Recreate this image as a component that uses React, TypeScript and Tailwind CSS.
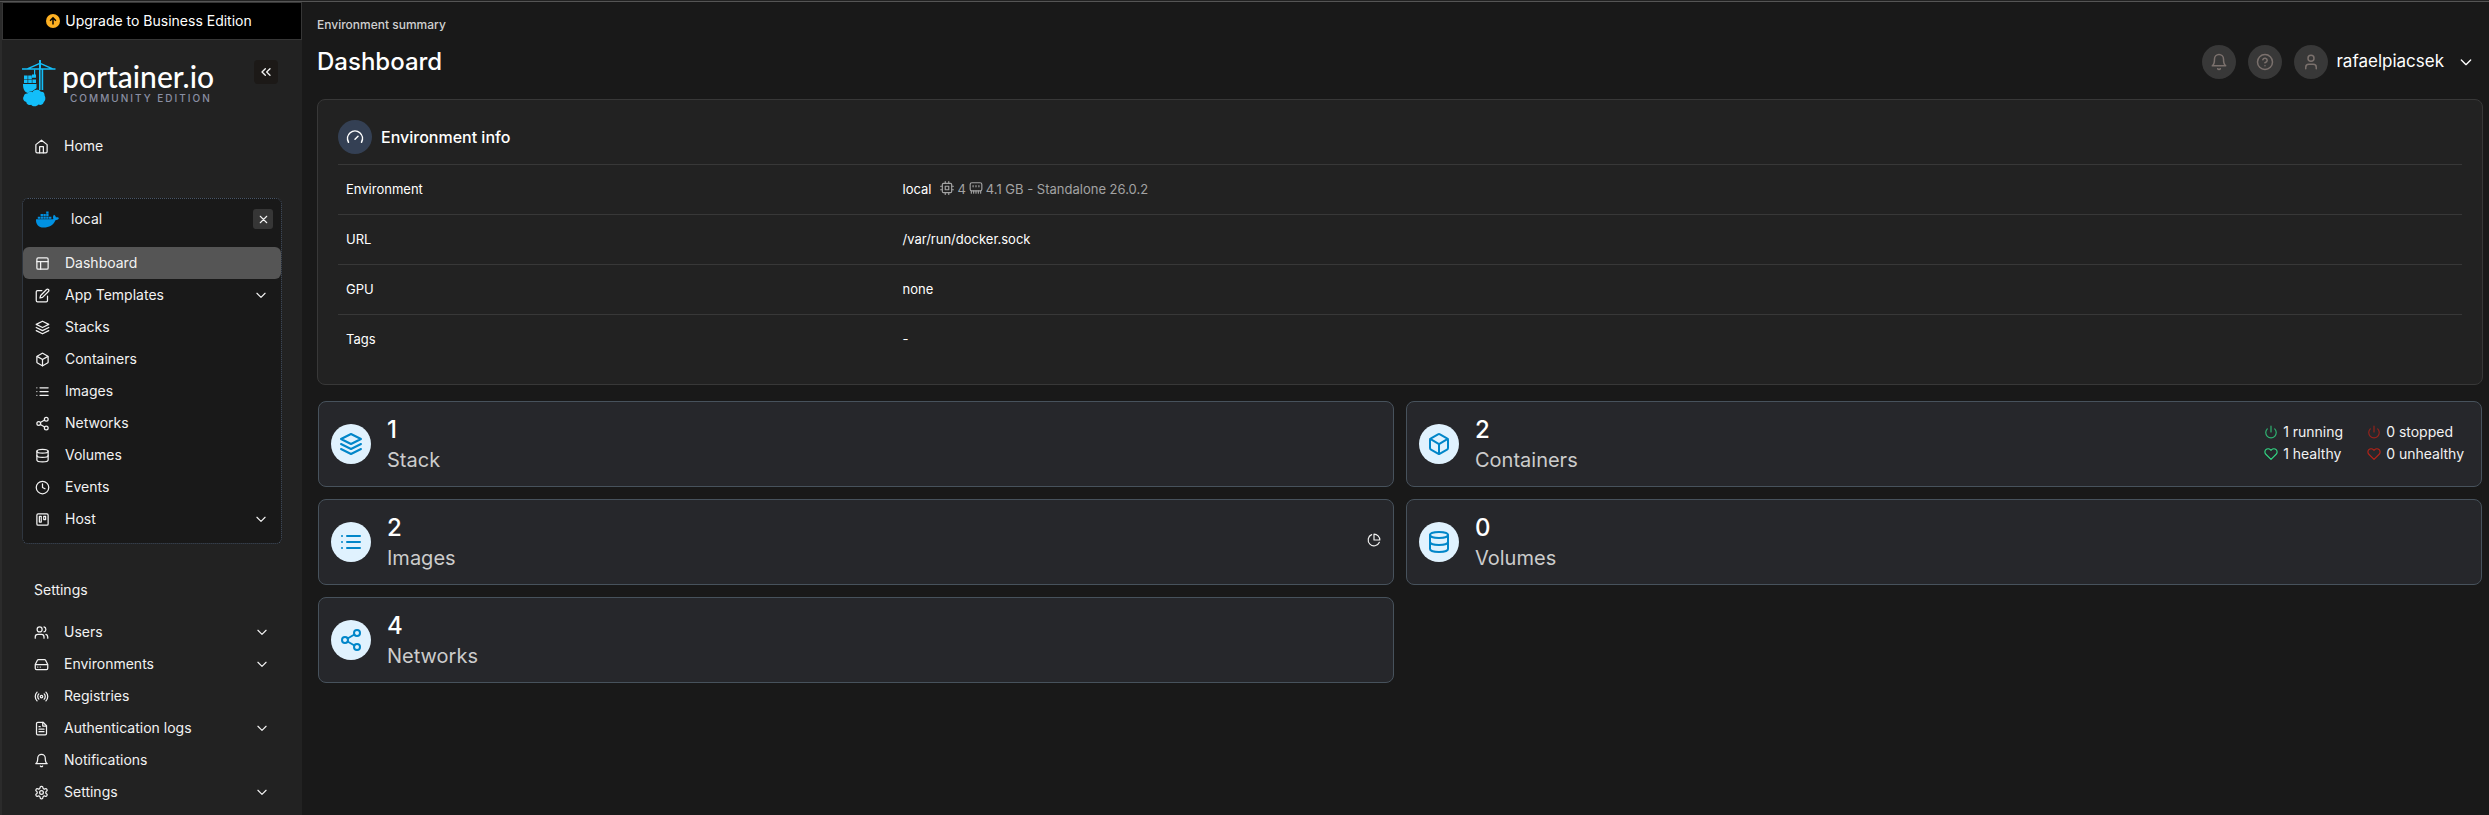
import React from "react";
import { FaDocker } from "react-icons/fa";

type IconName =
  | "home" | "layout" | "edit" | "layers" | "box" | "list" | "share" | "database" | "clock" | "trello"
  | "users" | "drive" | "radio" | "file" | "bell" | "settings" | "chevron" | "chevronsLeft" | "x"
  | "help" | "user" | "gauge" | "power" | "heart" | "pie" | "cpu" | "memory";

const shapes: Record<IconName, React.ReactNode> = {
  home: (<><path d="m3 9 9-7 9 7v11a2 2 0 0 1-2 2H5a2 2 0 0 1-2-2z" /><path d="M9 22V12h6v10" /></>),
  layout: (<><rect x="3" y="3" width="18" height="18" rx="2" /><path d="M3 9h18M9 21V9" /></>),
  edit: (<><path d="M11 4H4a2 2 0 0 0-2 2v14a2 2 0 0 0 2 2h14a2 2 0 0 0 2-2v-7" /><path d="M18.5 2.5a2.12 2.12 0 0 1 3 3L12 15l-4 1 1-4Z" /></>),
  layers: (<><path d="M12 2 2 7l10 5 10-5Z" /><path d="m2 17 10 5 10-5" /><path d="m2 12 10 5 10-5" /></>),
  box: (<><path d="M21 16V8a2 2 0 0 0-1-1.73l-7-4a2 2 0 0 0-2 0l-7 4A2 2 0 0 0 3 8v8a2 2 0 0 0 1 1.73l7 4a2 2 0 0 0 2 0l7-4A2 2 0 0 0 21 16z" /><path d="m3.27 6.96 8.73 5.05 8.73-5.05M12 22.08V12" /></>),
  list: <path d="M8 6h13M8 12h13M8 18h13M3 6h.01M3 12h.01M3 18h.01" />,
  share: (<><circle cx="18" cy="5" r="3" /><circle cx="6" cy="12" r="3" /><circle cx="18" cy="19" r="3" /><path d="m8.59 13.51 6.83 3.98M15.41 6.51l-6.82 3.98" /></>),
  database: (<><ellipse cx="12" cy="5" rx="9" ry="3" /><path d="M21 12c0 1.66-4 3-9 3s-9-1.34-9-3" /><path d="M3 5v14c0 1.66 4 3 9 3s9-1.34 9-3V5" /></>),
  clock: (<><circle cx="12" cy="12" r="10" /><path d="M12 6v6l4 2" /></>),
  trello: (<><rect x="3" y="3" width="18" height="18" rx="2" /><path d="M7 7h3v9H7zM14 7h3v5h-3z" /></>),
  users: (<><path d="M16 21v-2a4 4 0 0 0-4-4H6a4 4 0 0 0-4 4v2" /><circle cx="9" cy="7" r="4" /><path d="M22 21v-2a4 4 0 0 0-3-3.87M16 3.13a4 4 0 0 1 0 7.75" /></>),
  drive: (<><path d="M22 12H2M5.45 5.11 2 12v6a2 2 0 0 0 2 2h16a2 2 0 0 0 2-2v-6l-3.45-6.89A2 2 0 0 0 16.76 4H7.24a2 2 0 0 0-1.79 1.11zM6 16h.01M10 16h.01" /></>),
  radio: (<><circle cx="12" cy="12" r="2" /><path d="M4.93 19.07a10 10 0 0 1 0-14.14M7.76 16.24a6 6 0 0 1-1.3-1.95 6 6 0 0 1 0-4.59 6 6 0 0 1 1.3-1.95M16.24 7.76a6 6 0 0 1 1.3 2 6 6 0 0 1 0 4.59 6 6 0 0 1-1.3 1.95M19.07 4.93a10 10 0 0 1 0 14.14" /></>),
  file: (<><path d="M14.5 2H6a2 2 0 0 0-2 2v16a2 2 0 0 0 2 2h12a2 2 0 0 0 2-2V7.5L14.5 2z" /><path d="M14 2v6h6M16 13H8M16 17H8M10 9H8" /></>),
  bell: (<><path d="M18 8a6 6 0 0 0-12 0c0 7-3 9-3 9h18s-3-2-3-9" /><path d="M13.73 21a2 2 0 0 1-3.46 0" /></>),
  settings: (<><path d="M12.22 2h-.44a2 2 0 0 0-2 2v.18a2 2 0 0 1-1 1.73l-.43.25a2 2 0 0 1-2 0l-.15-.08a2 2 0 0 0-2.73.73l-.22.38a2 2 0 0 0 .73 2.73l.15.1a2 2 0 0 1 1 1.72v.51a2 2 0 0 1-1 1.74l-.15.09a2 2 0 0 0-.73 2.73l.22.38a2 2 0 0 0 2.73.73l.15-.08a2 2 0 0 1 2 0l.43.25a2 2 0 0 1 1 1.73V20a2 2 0 0 0 2 2h.44a2 2 0 0 0 2-2v-.18a2 2 0 0 1 1-1.73l.43-.25a2 2 0 0 1 2 0l.15.08a2 2 0 0 0 2.73-.73l.22-.39a2 2 0 0 0-.73-2.73l-.15-.08a2 2 0 0 1-1-1.74v-.5a2 2 0 0 1 1-1.74l.15-.09a2 2 0 0 0 .73-2.73l-.22-.38a2 2 0 0 0-2.73-.73l-.15.08a2 2 0 0 1-2 0l-.43-.25a2 2 0 0 1-1-1.73V4a2 2 0 0 0-2-2z" /><circle cx="12" cy="12" r="3" /></>),
  chevron: <path d="m5 9 7 7 7-7" />,
  chevronsLeft: <path d="m11 17-5-5 5-5M18 17l-5-5 5-5" />,
  x: <path d="M18 6 6 18M6 6l12 12" />,
  help: (<><circle cx="12" cy="12" r="10" /><path d="M9.09 9a3 3 0 0 1 5.83 1c0 2-3 3-3 3M12 17h.01" /></>),
  user: (<><path d="M19 21v-2a4 4 0 0 0-4-4H9a4 4 0 0 0-4 4v2" /><circle cx="12" cy="7" r="4" /></>),
  gauge: (<><path d="m12 15 4-4" /><path d="M3.34 19a10 10 0 1 1 17.32 0" /></>),
  power: <path d="M18.36 6.64a9 9 0 1 1-12.73 0M12 2v10" />,
  heart: <path d="M20.84 4.61a5.5 5.5 0 0 0-7.78 0L12 5.67l-1.06-1.06a5.5 5.5 0 0 0-7.78 7.78L12 21.23l8.84-8.84a5.5 5.5 0 0 0 0-7.78z" />,
  pie: (<><path d="M21.21 15.89A10 10 0 1 1 8 2.83" /><path d="M22 12A10 10 0 0 0 12 2v10z" /></>),
  cpu: (<><rect x="4" y="4" width="16" height="16" rx="2" /><rect x="9" y="9" width="6" height="6" /><path d="M15 1v3M15 20v3M1 15h3M1 9h3M20 15h3M20 9h3M9 1v3M9 20v3" /></>),
  memory: (<><rect x="2" y="3" width="20" height="14" rx="3" /><path d="M7 8v2M12 8v2M17 8v2M4 17v4M8 17v4M12 17v4M16 17v4M20 17v4" /></>),
};

function Icon({ name, className }: { name: IconName; className: string }) {
  return (
    <svg viewBox="0 0 24 24" fill="none" stroke="currentColor" strokeWidth="2" strokeLinecap="round" strokeLinejoin="round" className={`shrink-0 ${className}`} aria-hidden="true">
      {shapes[name]}
    </svg>
  );
}

function Crane() {
  return (
    <svg viewBox="0 0 34 47" className="h-[47px] w-[34px] shrink-0" fill="#13bef9" aria-hidden="true">
      <path d="M17 0h2v3l12 5.300h2.500v1.500H0V8.300h5L17 3z M17 4.500 8.500 8.300H17z M19 4.500v3.800h8.500z" fillRule="evenodd" />
      <path d="M17 9h1.600v21H17zM19.600 9h1.600v21h-1.600zM12 9.500h1.200V15H12z" />
      <path d="M10 14.500h4v3.200h-4zM2 15.500h3.600v3.500H2zM6.200 15.500h3.600v3.500H6.200zM2 19.600h3.600v3.500H2zM6.200 19.600h3.600v3.500H6.200zM10.400 19.600h3.600v3.500h-3.600z" />
      <path d="M1 24h13.500v4c-1.500 2-3 1.500-4.500 3.500-1.500-.5-3 .2-4.200 1.500C2.500 32 1 29 1 24z" />
      <path d="M5.500 33.500c1-2 3.500-2.500 5-1.300 1.500-3 6.500-3.200 8.300-.4 2.300-.6 4 1.200 3.700 3.500 1.500 2.700 1 5.400-.8 7-.7 2.500-3.300 3.300-5.200 2.200-1.700 2.400-6 2.400-7.300.2-2.600 1-4.800-.4-4.900-2.600C.800 41 .500 37.500 2 36c0-1.700 1.600-2.900 3.500-2.500z" />
    </svg>
  );
}

type Item = { label: string; icon: IconName; expandable?: boolean; active?: boolean };

const environmentItems: Item[] = [
  { label: "Dashboard", icon: "layout", active: true },
  { label: "App Templates", icon: "edit", expandable: true },
  { label: "Stacks", icon: "layers" },
  { label: "Containers", icon: "box" },
  { label: "Images", icon: "list" },
  { label: "Networks", icon: "share" },
  { label: "Volumes", icon: "database" },
  { label: "Events", icon: "clock" },
  { label: "Host", icon: "trello", expandable: true },
];

const settingsItems: Item[] = [
  { label: "Users", icon: "users", expandable: true },
  { label: "Environments", icon: "drive", expandable: true },
  { label: "Registries", icon: "radio" },
  { label: "Authentication logs", icon: "file", expandable: true },
  { label: "Notifications", icon: "bell" },
  { label: "Settings", icon: "settings", expandable: true },
];

function NavItem({ item }: { item: Item }) {
  return (
    <li>
      <a href="#" className={`flex h-8 items-center rounded-md pl-3 pr-[13px] text-sm ${item.active ? "bg-[#555555]" : ""}`}>
        <Icon name={item.icon} className="size-[15px]" />
        <span className="ml-[15px] flex-1">{item.label}</span>
        {item.expandable && <Icon name="chevron" className="size-[14px]" />}
      </a>
    </li>
  );
}

function Sidebar() {
  return (
    <aside className="flex w-[302px] shrink-0 flex-col border-l-2 border-[#2b2b2b] bg-[#222222] text-[#f2f2f2]">
      <button className="flex h-[38px] items-center justify-center gap-[5px] border border-[#363636] bg-black pr-[6px] text-sm text-white">
        <svg viewBox="0 0 24 24" className="size-[14px]" aria-hidden="true">
          <circle cx="12" cy="12" r="12" fill="#fdb022" />
          <path d="M12 18V7M7 11.500l5-5 5 5" fill="none" stroke="#000" strokeWidth="2.500" />
        </svg>
        Upgrade to Business Edition
      </button>

      <div className="flex items-start justify-between pl-5 pr-6 pt-5">
        <a href="#" className="flex gap-[6px]" aria-label="Portainer">
          <Crane />
          <span className="flex flex-col">
            <span className="font-[Lato] text-[30px] font-medium leading-8 text-white">portainer.io</span>
            <span className="pl-2 text-[10px] font-medium leading-3 tracking-[2px] text-[#8a8fa3]">COMMUNITY EDITION</span>
          </span>
        </a>
        <button aria-label="Collapse sidebar" className="flex size-6 items-center justify-center rounded bg-[#1c1917]">
          <Icon name="chevronsLeft" className="size-4" />
        </button>
      </div>

      <nav className="px-5" aria-label="Main">
        <ul className="pt-[23px]">
          <NavItem item={{ label: "Home", icon: "home" }} />
        </ul>

        <section className="mt-9 rounded-md border border-dotted border-[#475467] bg-[#191919] pb-2">
          <div className="flex h-12 items-center pb-2 pl-[13px] pr-2">
            <FaDocker className="size-[23px] text-[#0091e2]" aria-hidden="true" />
            <span className="ml-3 flex-1 text-sm">local</span>
            <button aria-label="Close environment" className="flex size-5 items-center justify-center rounded-[3px] bg-[#363636]">
              <Icon name="x" className="size-[13px]" />
            </button>
          </div>
          <ul>{environmentItems.map((item) => <NavItem key={item.label} item={item} />)}</ul>
        </section>

        <h2 className="pb-4 pl-3 pt-9 text-sm leading-5">Settings</h2>
        <ul>{settingsItems.map((item) => <NavItem key={item.label} item={item} />)}</ul>
      </nav>
    </aside>
  );
}

function Header() {
  const round = "flex size-[34px] items-center justify-center rounded-full bg-[#383838] text-[#7b716d]";
  return (
    <header className="px-[15px] pt-[15px]">
      <p className="text-xs font-medium leading-4 text-[#d0d0d0]">Environment summary</p>
      <div className="mt-3 flex h-[34px] items-center">
        <h1 className="flex-1 text-2xl font-medium text-white">Dashboard</h1>
        <div className="flex items-center gap-3">
          <button className={round} aria-label="Notifications"><Icon name="bell" className="size-[18px]" /></button>
          <button className={round} aria-label="Help"><Icon name="help" className="size-[18px]" /></button>
          <button className="flex items-center text-[17px] text-white">
            <span className={round}><Icon name="user" className="size-[18px]" /></span>
            <span className="ml-2">rafaelpiacsek</span>
            <Icon name="chevron" className="ml-[14px] size-4" />
          </button>
        </div>
      </div>
    </header>
  );
}

const rows: { label: string; value: React.ReactNode }[] = [
  {
    label: "Environment",
    value: (
      <span className="flex items-center">
        local
        <span className="ml-[9px] flex items-center gap-[3px] text-[#a3a3a3]">
          <Icon name="cpu" className="mb-1 size-[14px]" />4
          <Icon name="memory" className="mb-1 size-[14px]" />4.1 GB - Standalone 26.0.2
        </span>
      </span>
    ),
  },
  { label: "URL", value: "/var/run/docker.sock" },
  { label: "GPU", value: "none" },
  { label: "Tags", value: "-" },
];

function EnvironmentInfo() {
  return (
    <section className="ml-[15px] mr-[6px] mt-5 rounded-lg border border-[#383838] bg-[#222222] px-5 pb-5 pt-5">
      <h2 className="flex items-center gap-[9px] pb-[10px] text-base font-medium text-white">
        <span className="flex size-[34px] items-center justify-center rounded-full bg-[#344054]">
          <Icon name="gauge" className="size-[18px]" />
        </span>
        Environment info
      </h2>
      <table className="w-full border-separate border-spacing-0 text-[13px] text-white">
        <tbody>
          {rows.map((row) => (
            <tr key={row.label} className="h-[50px]">
              <th scope="row" className="w-[26.2%] border-t border-[#383838] px-2 text-left font-normal">{row.label}</th>
              <td className="border-t border-[#383838] px-2">{row.value}</td>
            </tr>
          ))}
        </tbody>
      </table>
    </section>
  );
}

function Tile({ icon, count, label, children }: { icon: IconName; count: number; label: string; children?: React.ReactNode }) {
  return (
    <a href="#" className="flex h-[86px] items-center rounded-lg border border-[#47525c] bg-[#26272b] px-3">
      <span className="flex size-10 shrink-0 items-center justify-center rounded-full bg-[#e0f2fe] text-[#0086c9]">
        <Icon name={icon} className="size-6" />
      </span>
      <span className="ml-4 flex flex-1 flex-col">
        <span className="text-2xl font-medium leading-8 text-white">{count}</span>
        <span className="text-xl leading-7 text-[#cccccc]">{label}</span>
      </span>
      {children}
    </a>
  );
}

function Stat({ icon, tone, text }: { icon: IconName; tone: string; text: string }) {
  return (
    <span className="flex items-center gap-[5px]">
      <Icon name={icon} className={`size-[14px] ${tone}`} />
      {text}
    </span>
  );
}

export default function App() {
  return (
    <div className="flex min-h-screen flex-col bg-[#191919] font-[Inter,sans-serif]">
      <div className="h-[2px] border-b border-[#555555] bg-[#222222]" />
      <div className="flex flex-1">
        <Sidebar />
        <main className="min-w-0 flex-1">
          <Header />
          <EnvironmentInfo />
          <div className="grid grid-cols-2 gap-3 px-4 pb-4 pr-[7px] pt-4">
            <Tile icon="layers" count={1} label="Stack" />
            <Tile icon="box" count={2} label="Containers">
              <span className="mb-[2px] mr-[5px] grid grid-cols-[auto_auto] gap-x-6 text-sm leading-[22px] text-[#f2f2f2]">
                <Stat icon="power" tone="text-[#2fb573]" text="1 running" />
                <Stat icon="power" tone="text-[#96231c]" text="0 stopped" />
                <Stat icon="heart" tone="text-[#32d583]" text="1 healthy" />
                <Stat icon="heart" tone="text-[#b42318]" text="0 unhealthy" />
              </span>
            </Tile>
            <Tile icon="list" count={2} label="Images">
              <Icon name="pie" className="mb-1 size-[14px] text-[#f2f2f2]" />
            </Tile>
            <Tile icon="database" count={0} label="Volumes" />
            <Tile icon="share" count={4} label="Networks" />
          </div>
        </main>
      </div>
    </div>
  );
}
